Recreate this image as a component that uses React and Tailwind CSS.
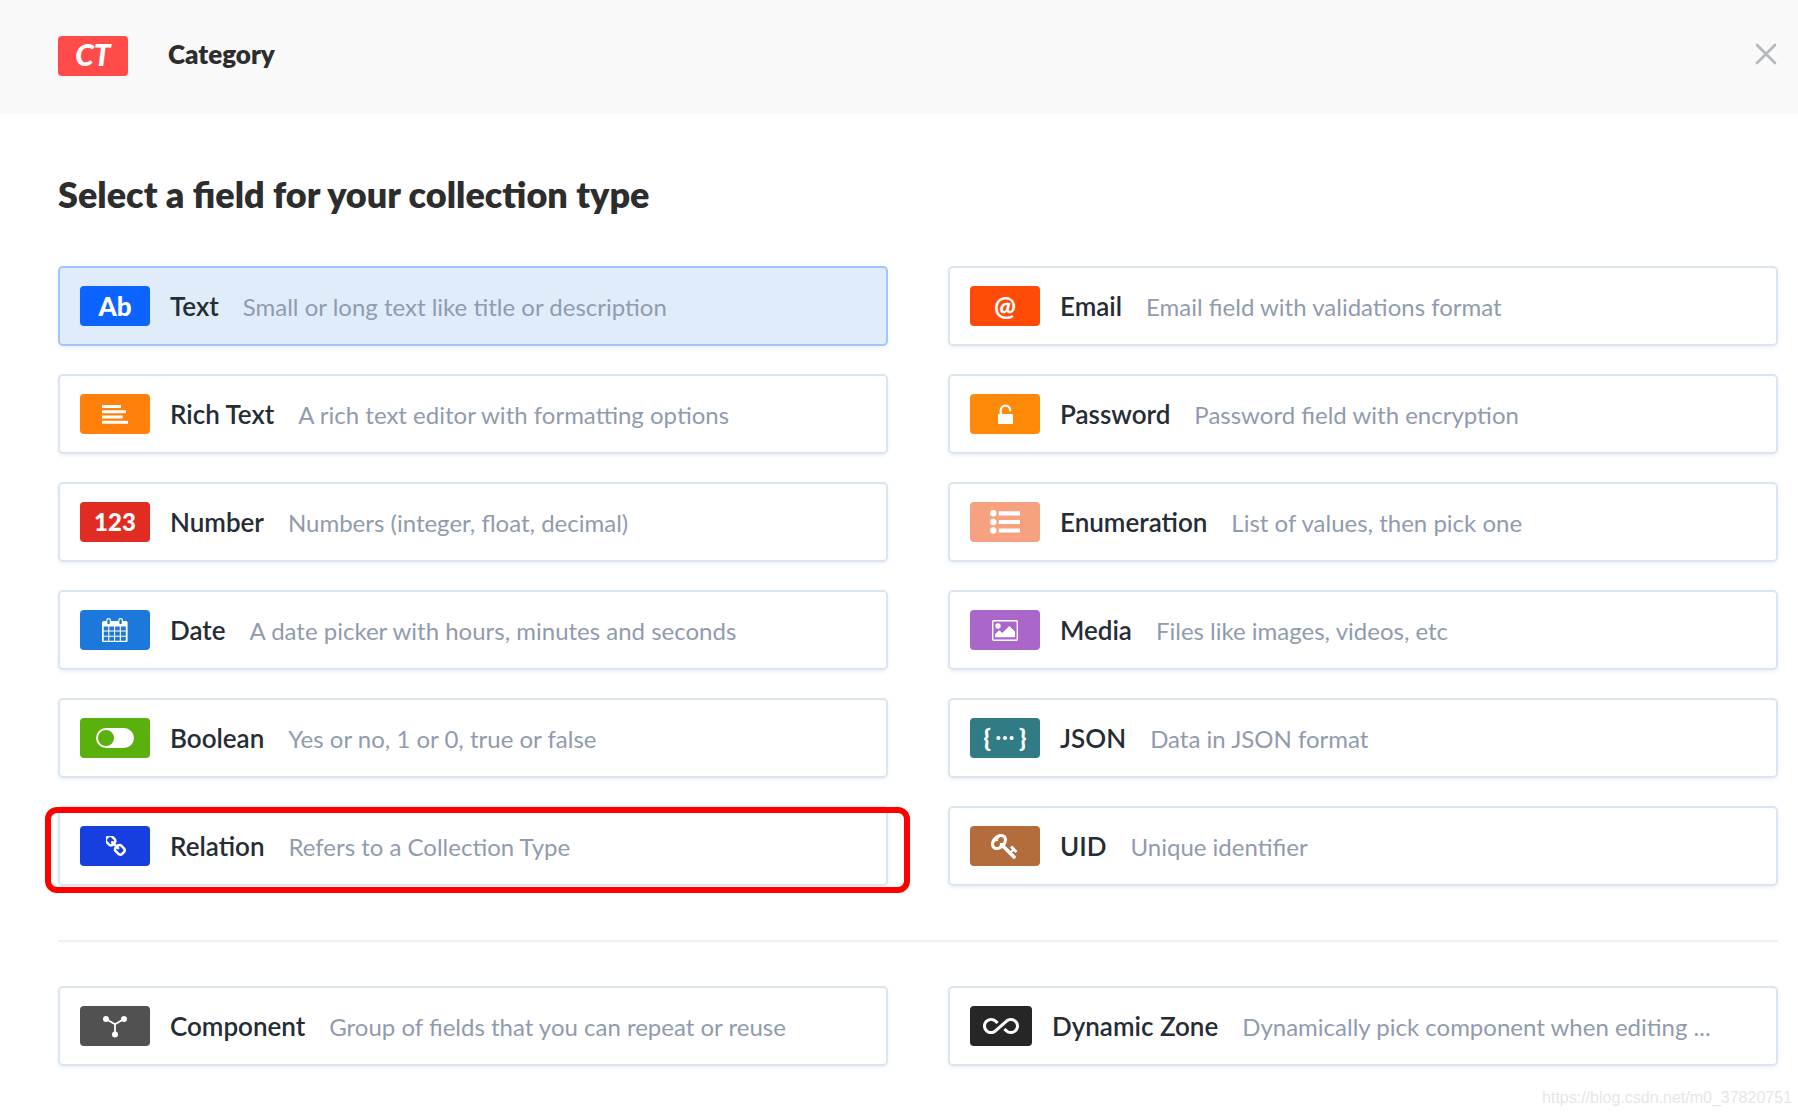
import React, { useState } from "react";
import clsx from "clsx";
import { MdAllInclusive } from "react-icons/md";

function Glyph({ children }) {
  return (
    <svg width="70" height="40" viewBox="0 0 70 40" fill="currentColor" aria-hidden="true">
      {children}
    </svg>
  );
}

const RichTextIcon = () => (
  <Glyph>
    <path d="M22 11h19v3H22zM22 16.2h24v3H22zM22 21.4h20.7v3H22zM22 26.7h26v3H22z" />
  </Glyph>
);

const CalendarIcon = () => (
  <Glyph>
    <path
      fillRule="evenodd"
      d="M23.5 11h22.6a1.5 1.5 0 0 1 1.5 1.5v18a1.5 1.5 0 0 1-1.5 1.5H23.5a1.5 1.5 0 0 1-1.5-1.5v-18a1.5 1.5 0 0 1 1.5-1.5zM23.7 16.4v4.2h4.5v-4.2zM29.3 16.4v4.2h4.7v-4.2zM35.1 16.4v4.2h4.7v-4.2zM40.9 16.4v4.2h4.9v-4.2zM23.7 21.6v4.2h4.5v-4.2zM29.3 21.6v4.2h4.7v-4.2zM35.1 21.6v4.2h4.7v-4.2zM40.9 21.6v4.2h4.9v-4.2zM23.7 26.8v4h4.5v-4zM29.3 26.8v4h4.7v-4zM35.1 26.8v4h4.7v-4zM40.9 26.8v4h4.9v-4z"
    />
    <rect x="26.8" y="8.6" width="3.6" height="6.2" rx="1.8" fill="#1c78db" stroke="currentColor" strokeWidth="1.2" />
    <rect x="38.8" y="8.6" width="3.6" height="6.2" rx="1.8" fill="#1c78db" stroke="currentColor" strokeWidth="1.2" />
  </Glyph>
);

const ToggleIcon = () => (
  <Glyph>
    <path fillRule="evenodd" d="M26 10h18a10 10 0 0 1 0 20H26a10 10 0 0 1 0-20zM26 12a8 8 0 1 0 0 16 8 8 0 0 0 0-16z" />
  </Glyph>
);

const ChainIcon = () => (
  <Glyph>
    <svg x="26" y="10" width="20" height="20" viewBox="144 144 1504 1504">
      <path d="M1456 1216q0-40-28-68l-208-208q-28-28-68-28-42 0-72 32 3 3 19 18.5t21.5 21.5 15 19 13 25.5 3.5 27.5q0 40-28 68t-68 28q-15 0-27.5-3.5t-25.5-13-19-15-21.5-21.5-18.5-19q-33 31-33 73 0 40 28 68l206 207q27 27 68 27 40 0 68-26l147-146q28-28 28-67zm-703-705q0-40-28-68l-206-207q-28-28-68-28-39 0-68 27l-147 146q-28 28-28 67 0 40 28 68l208 208q27 27 68 27 42 0 72-31-3-3-19-18.5t-21.5-21.5-15-19-13-25.5-3.5-27.5q0-40 28-68t68-28q15 0 27.5 3.5t25.5 13 19 15 21.5 21.5 18.5 19q33-31 33-73zm895 705q0 120-85 203l-147 146q-83 83-203 83-121 0-204-85l-206-207q-83-83-83-203 0-123 88-209l-88-88q-86 88-208 88-120 0-204-84l-208-208q-84-84-84-204t85-203l147-146q83-83 203-83 121 0 204 85l206 207q83 83 83 203 0 123-88 209l88 88q86-88 208-88 120 0 204 84l208 208q84 84 84 204z" />
    </svg>
  </Glyph>
);

const LockIcon = () => (
  <Glyph>
    <rect x="28" y="20" width="15" height="10" rx="0.8" />
    <path d="M30.8 20.5v-4.2a4.7 4.7 0 0 1 9.4 0v.3" fill="none" stroke="currentColor" strokeWidth="2.3" strokeLinecap="round" />
  </Glyph>
);

const ListIcon = () => (
  <Glyph>
    <circle cx="23.3" cy="11.3" r="3.2" />
    <circle cx="23.3" cy="20" r="3.2" />
    <circle cx="23.3" cy="28.5" r="3.2" />
    <path d="M28.7 9.2H50v4.2H28.7zM28.7 17.9H50v4.2H28.7zM28.7 26.4H50v4.2H28.7z" />
  </Glyph>
);

const PictureIcon = () => (
  <Glyph>
    <rect x="22.7" y="10.7" width="24.6" height="19.6" rx="1" fill="none" stroke="currentColor" strokeWidth="1.4" />
    <circle cx="28" cy="16" r="2.7" />
    <path d="M25 27.3v-3l4.3-4 3 2.6 7-7 5.7 5.7v5.7z" />
  </Glyph>
);

const JsonIcon = () => (
  <span className="flex items-center gap-[5px] text-2xl font-black leading-none">
    <span>{"{"}</span>
    <svg width="18" height="6" viewBox="0 0 18 6" fill="currentColor" aria-hidden="true">
      <circle cx="2.4" cy="3" r="2.1" />
      <circle cx="9" cy="3" r="2.1" />
      <circle cx="15.6" cy="3" r="2.1" />
    </svg>
    <span>{"}"}</span>
  </span>
);

const KeyIcon = () => (
  <Glyph>
    <svg x="21" y="6" width="28" height="28" viewBox="0 0 1792 1792">
      <path d="M832 512q0-80-56-136t-136-56-136 56-56 136q0 42 19 83-41-19-83-19-80 0-136 56t-56 136 56 136 136 56 136-56 56-136q0-42-19-83 41 19 83 19 80 0 136-56t56-136zm851 704q0 17-49 66t-66 49q-9 0-28.5-16t-36.5-33-38.5-40-24.5-26l-96 96 220 220q28 28 28 68 0 42-39 81t-81 39q-40 0-68-28l-671-671q-176 131-365 131-163 0-265.5-102.5t-102.5-265.5q0-160 95-313t248-248 313-95q163 0 265.5 102.5t102.5 265.5q0 189-131 365l355 355 96-96q-3-3-26-24.5t-40-38.5-33-36.5-16-28.5q0-17 49-66t66-49q13 0 23 10 6 6 46 44.5t82 79.5 86.5 86 73 78 28.5 41z" />
    </svg>
  </Glyph>
);

const ComponentIcon = () => (
  <Glyph>
    <path d="M26 13l9 5.2 9-5.2M35 18v10.5" fill="none" stroke="currentColor" strokeWidth="1.8" />
    <circle cx="26" cy="13" r="3" />
    <circle cx="44" cy="13" r="3" />
    <circle cx="35" cy="28.5" r="3" />
  </Glyph>
);

const fields = [
  { name: "Text", description: "Small or long text like title or description", color: "bg-[#0b64ff]", icon: "Ab" },
  { name: "Email", description: "Email field with validations format", color: "bg-[#ff4b08]", icon: "@" },
  { name: "Rich Text", description: "A rich text editor with formatting options", color: "bg-[#ff800a]", icon: <RichTextIcon /> },
  { name: "Password", description: "Password field with encryption", color: "bg-[#ff8a09]", icon: <LockIcon /> },
  {
    name: "Number",
    description: "Numbers (integer, float, decimal)",
    color: "bg-[#e02c23]",
    icon: <span className="text-2xl leading-none">123</span>,
  },
  { name: "Enumeration", description: "List of values, then pick one", color: "bg-[#f6a180]", icon: <ListIcon /> },
  { name: "Date", description: "A date picker with hours, minutes and seconds", color: "bg-[#1c78db]", icon: <CalendarIcon /> },
  { name: "Media", description: "Files like images, videos, etc", color: "bg-[#aa67c9]", icon: <PictureIcon /> },
  { name: "Boolean", description: "Yes or no, 1 or 0, true or false", color: "bg-[#5ab00c]", icon: <ToggleIcon /> },
  { name: "JSON", description: "Data in JSON format", color: "bg-[#317b85]", icon: <JsonIcon /> },
  { name: "Relation", description: "Refers to a Collection Type", color: "bg-[#173fe0]", icon: <ChainIcon />, outlined: true },
  { name: "UID", description: "Unique identifier", color: "bg-[#b36d3d]", icon: <KeyIcon /> },
];

const groups = [
  { name: "Component", description: "Group of fields that you can repeat or reuse", color: "bg-[#515151]", icon: <ComponentIcon /> },
  {
    name: "Dynamic Zone",
    description: "Dynamically pick component when editing ...",
    color: "bg-[#262626]",
    icon: <MdAllInclusive size={36} />,
    narrow: true,
  },
];

function FieldCard({ field, active, onSelect }) {
  return (
    <div className="relative min-w-0">
      <button
        type="button"
        onClick={() => onSelect(field.name)}
        className={clsx(
          "flex w-full items-center gap-5 rounded-[5px] border-2 px-5 py-[18px] text-left shadow-[0_2px_4px_#eef1f7]",
          active ? "border-[#9fc7f9] bg-[#e0ecfa]" : "border-[#dbe5f1] bg-white"
        )}
      >
        <span
          className={clsx(
            "flex h-10 shrink-0 items-center justify-center overflow-hidden rounded-[4px] text-[26px] font-black leading-none text-white",
            field.narrow ? "w-[62px]" : "w-[70px]",
            field.color
          )}
        >
          {field.icon}
        </span>
        <span className="flex min-w-0 items-baseline gap-6 leading-9">
          <span className="whitespace-nowrap text-[26px] font-semibold text-[#262c34]">{field.name}</span>
          <span className="truncate text-2xl text-[#919bae]">{field.description}</span>
        </span>
      </button>
      {field.outlined && (
        <span className="pointer-events-none absolute -bottom-[7px] -left-[13px] -right-[22px] top-px rounded-xl border-[6px] border-[#ff0000]" />
      )}
    </div>
  );
}

export default function App() {
  const [selected, setSelected] = useState("Text");

  return (
    <div className="relative min-h-screen bg-white font-['Lato',sans-serif] text-[#2d2d2d]">
      <header className="flex items-start bg-[#f9f9f9] pb-[38px] pl-[58px] pr-5 pt-9">
        <span className="flex h-10 w-[70px] items-center justify-center rounded-[4px] bg-[#ff4b4a] pb-1 text-3xl font-black italic leading-9 text-white">
          CT
        </span>
        <span className="ml-10 text-[26px] font-extrabold leading-9">Category</span>
        <button type="button" aria-label="Close" className="ml-auto py-[6px] text-[#b4b8bb]">
          <svg width="24" height="24" viewBox="0 0 24 24" fill="none" stroke="currentColor" strokeWidth="2.6" strokeLinecap="round">
            <path d="M3 3l18 18M21 3L3 21" />
          </svg>
        </button>
      </header>

      <main className="pb-12 pl-[58px] pr-5 pt-[60px]">
        <h1 className="text-4xl font-extrabold">Select a field for your collection type</h1>

        <div className="mt-[52px] grid grid-cols-2 gap-x-[60px] gap-y-7">
          {fields.map((field) => (
            <FieldCard key={field.name} field={field} active={selected === field.name} onSelect={setSelected} />
          ))}
        </div>

        <hr className="mb-11 mt-[54px] border-t-2 border-[#edf1f6]" />

        <div className="grid grid-cols-2 gap-x-[60px] gap-y-7">
          {groups.map((field) => (
            <FieldCard key={field.name} field={field} active={selected === field.name} onSelect={setSelected} />
          ))}
        </div>
      </main>

      <span className="absolute bottom-[6px] right-[6px] font-['Liberation_Sans',sans-serif] text-base text-[#e6e6e6]">
        https://blog.csdn.net/m0_37820751
      </span>
    </div>
  );
}
